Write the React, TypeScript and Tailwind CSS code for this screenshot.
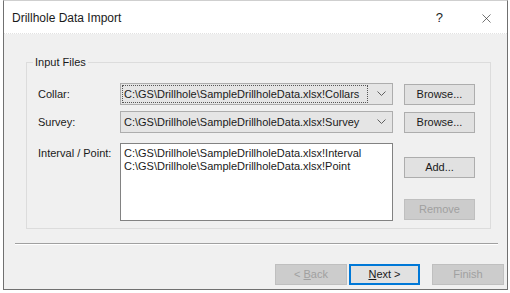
import { X } from "lucide-react";

function Chevron() {
  return (
    <svg width="9" height="6" viewBox="0 0 9 6" className="shrink-0">
      <path d="M0.5 0.5 L4.5 4.5 L8.5 0.5" fill="none" stroke="#606060" strokeWidth="1" />
    </svg>
  );
}

function Combo({ value, focused }: { value: string; focused?: boolean }) {
  return (
    <div className="flex h-[22px] w-[273px] items-center border border-[#adadad] bg-[#e5e5e5] pl-[1px] pr-[6px]">
      <div
        className={
          focused
            ? "flex h-[18px] flex-1 items-center border border-dotted border-[#555] pl-[1px]"
            : "flex h-[18px] flex-1 items-center border border-transparent pl-[1px]"
        }
      >
        {value}
      </div>
      <div className="ml-[9px]">
        <Chevron />
      </div>
    </div>
  );
}

function Button({
  label,
  disabled,
  isDefault,
  w = "w-[72px]",
}: {
  label: React.ReactNode;
  disabled?: boolean;
  isDefault?: boolean;
  w?: string;
}) {
  let cls = "flex h-[21px] items-center justify-center " + w + " ";
  if (disabled) {
    cls += "border border-[#bfbfbf] bg-[#cccccc] text-[#a0a0a0]";
  } else if (isDefault) {
    cls += "border-2 border-[#0078d7] bg-[#e1e1e1] text-[#1a1a1a]";
  } else {
    cls += "border border-[#adadad] bg-[#e1e1e1] text-[#1a1a1a]";
  }
  return <div className={cls}>{label}</div>;
}

export default function App() {
  return (
    <div
      className="h-[293px] w-[510px] bg-white pl-[3px] pr-[2px] pb-[3px] text-[11px] text-[#1a1a1a]"
      style={{ fontFamily: '"Liberation Sans", Arial, sans-serif' }}
    >
      <div className="flex h-full flex-col border-x border-b border-t border-[#707070] border-t-[#cfcfcf]">
        {/* title bar */}
        <div className="flex h-[33px] shrink-0 items-center border-b border-dotted border-[#e2e2e2] bg-white pl-[8px] pt-[2px]">
          <span className="text-[12px] text-[#1a1a1a]">Drillhole Data Import</span>
          <span className="ml-auto mr-[36px] text-[13px] text-[#222]">?</span>
          <X size={15} strokeWidth={1.1} color="#333" className="mr-[13px]" />
        </div>

        {/* body */}
        <div className="flex flex-1 flex-col bg-[#f0f0f0]">
          {/* group box */}
          <div className="relative ml-[22px] mr-[16px] mt-[28px] flex flex-col border border-[#dcdcdc] pb-[7px] pl-[11px] pr-[13px] pt-[20px]">
            <span className="absolute left-[6px] top-[-8px] bg-[#f0f0f0] px-[2px] leading-[14px]">Input Files</span>

            <div className="flex h-[22px] items-center">
              <span className="w-[82px]">Collar:</span>
              <Combo value="C:\GS\Drillhole\SampleDrillholeData.xlsx!Collars" focused />
              <div className="ml-[11px]">
                <Button label="Browse..." w="w-[71px]" />
              </div>
            </div>

            <div className="mt-[6px] flex h-[22px] items-center">
              <span className="w-[82px]">Survey:</span>
              <Combo value="C:\GS\Drillhole\SampleDrillholeData.xlsx!Survey" />
              <div className="ml-[11px]">
                <Button label="Browse..." w="w-[71px]" />
              </div>
            </div>

            <div className="mt-[10px] flex">
              <span className="w-[82px] pt-[4px] leading-[13px]">Interval / Point:</span>
              <div className="h-[78px] w-[273px] border border-[#828282] bg-white px-[3px] pt-[3px] leading-[13px]">
                <div>C:\GS\Drillhole\SampleDrillholeData.xlsx!Interval</div>
                <div>C:\GS\Drillhole\SampleDrillholeData.xlsx!Point</div>
              </div>
              <div className="ml-[11px] flex flex-col pt-[14px]">
                <Button label="Add..." w="w-[71px]" />
                <div className="mt-[21px]">
                  <Button label="Remove" disabled w="w-[71px]" />
                </div>
              </div>
            </div>
          </div>

          {/* separator */}
          <div className="ml-[11px] mr-[9px] mt-[14px] h-[2px] border-t border-[#a0a0a0] border-b-white border-b" />

          {/* wizard buttons */}
          <div className="mt-[19px] flex pr-[3px]">
            <div className="ml-auto flex">
              <Button
                disabled
                label={
                  <span>
                    &lt; <span className="underline">B</span>ack
                  </span>
                }
              />
              <div className="ml-[2px]">
                <Button
                  isDefault
                  w="w-[71px]"
                  label={
                    <span>
                      <span className="underline">N</span>ext &gt;
                    </span>
                  }
                />
              </div>
              <div className="ml-[12px]">
                <Button disabled label="Finish" />
              </div>
            </div>
          </div>
        </div>
      </div>
    </div>
  );
}
